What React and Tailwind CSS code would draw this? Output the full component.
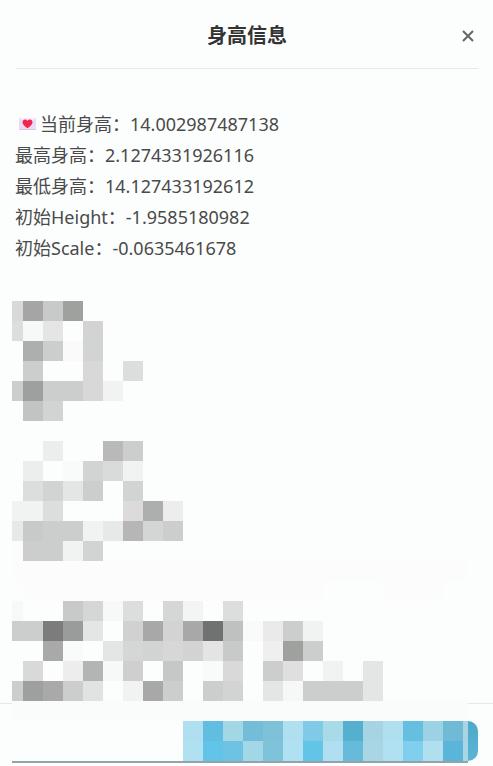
import React from "react";

const INFO = [
  { label: "当前身高", value: "14.002987487138", icon: true },
  { label: "最高身高", value: "2.1274331926116" },
  { label: "最低身高", value: "14.127433192612" },
  { label: "初始Height", value: "-1.9585180982" },
  { label: "初始Scale", value: "-0.0635461678" },
];

// one hex colour per tile, "-" leaves the tile empty
const BLOCK_ONE = [
  "d8d8d8 a5a5a5 c8cac9 9fa19f",
  "dcdedd f7f9f8 e5e5e5 - d3d3d3",
  "- adafae cccecd fafafa d2d4d3",
  "- cccecd - - d8d8d8 - dcdedd",
  "cccecd 9ea09f cccecd cccecd d8d8d8 f1f3f2",
  "- c2c4c3 d2d4d3",
];

const BLOCK_TWO = [
  "- - eceeed - - b9b9b9 cccecd",
  "- eceeed - f9fbfa d2d4d3 d9dbda f1f3f2",
  "- dcdedd d2d4d3 e4e6e5 cccecd - d2d4d3",
  "f1f3f2 f1f3f2 dcdedd - - - dcdadb adafae ecedec",
  "e7e9e8 c8cac9 cccecd cccecd f1f3f2 e7e9e8 b6b6b6 d4d6d5 cccecd",
  "fcfcfc cccecd cccecd f1f3f2 d2d4d3",
];

const BLOCK_THREE = [
  "f7f9f8 - - c8cac9 d5d7d6 f7f9f8 dcdedd - d5d7d6 f3f5f4 - dcdedd",
  "cccecd cccecd 7c7c7c 9a9c9b e4e6e5 - d1d1d1 a8a8a8 d3d3d3 a8a8a8 707271 bfc1c0 f9fbfa eaeaea cccecd f1f3f2",
  "- - a9a9a9 f9fbfa - e4e6e5 d5d7d6 d2d4d3 d7d7d7 d3d3d3 e4e4e4 c8cac9 - efefef 9fa19f cccecd",
  "- d9d9d9 - ecedec b3b5b4 f7f9f8 cfcfcf - c6c8c7 - f9fbfa d9d9d9 - cccecd e0dfe0 - f1f3f2 - e4e6e5",
  "cccecd 9ea09f a9a9a9 cccecd e1e3e2 - f1f3f2 a8a8a8 cccecd - cccecd d2d4d3 - e4e6e5 f6f8f7 cccecd cccecd cccecd e4e6e5",
];

const ACTION_TILES = [
  "fcfefd fcfefd fcfefd fcfefd fcfefd fcfefd fcfefd fcfefd fcfefd b0dff0 62bee0 a3d7e6 74bdd9 7ec1d8 b0dff0 7fcbe7 a8dae8 55b0d0 a6d4e3 b0dff0 65c0df 9dd2e4 6fbad4 a8d4e3",
  "fcfefd fcfefd fcfefd fcfefd fcfefd fcfefd fcfefd fcfefd fcfefd b0e1f2 62c5e8 6dc3e1 a2d7e8 7fc3db b0e1f2 62c5e8 afdff0 66bbda a8d6e5 b0e1f2 80d0ed b0dff0 5ab5d9 a8d6e5",
];

const Mosaic = ({ rows }) => (
  <div aria-hidden="true">
    {rows.map((row, i) => (
      <div key={i} className="grid h-5 grid-cols-[11px_repeat(22,20px)_5px]">
        {row.split(" ").map((color, j) => (
          <span
            key={j}
            style={{ backgroundColor: color === "-" ? undefined : `#${color}` }}
          />
        ))}
      </div>
    ))}
  </div>
);

const LoveLetter = () => (
  <svg viewBox="0 0 17 12" className="mr-1 ml-1 h-3 w-[17px]" aria-hidden="true">
    <rect width="17" height="12" fill="#e9dcf5" />
    <path d="M0 0h17L8.5 7z" fill="#f3eafb" />
    <path d="M0 11.5h17" stroke="#d6c6ea" />
    <path
      d="M8.5 10.3C5.5 8 3.5 6.3 3.5 4.2 3.5 1.3 7 .7 8.5 3 10 .7 13.5 1.3 13.5 4.2c0 2.1-2 3.8-5 6.1z"
      fill="#f5234f"
    />
  </svg>
);

const App = () => {
  return (
    <div className="min-h-screen overflow-hidden bg-[#fcfefd] font-['Noto_Sans','Noto_Sans_CJK_SC',sans-serif] text-[#4a4a4a]">
      <header className="relative mr-[15px] ml-4 flex h-[69px] items-center justify-center border-b border-[#e6e8e8] pt-1">
        <h1 className="text-xl font-bold text-[#333]">身高信息</h1>
        <button
          type="button"
          aria-label="关闭"
          className="absolute right-0 flex h-5 w-5 items-center justify-center text-[#666]"
        >
          <svg viewBox="0 0 12 12" className="h-3 w-3" fill="none" stroke="currentColor" strokeWidth="2">
            <path d="M1 1l10 10M11 1L1 11" />
          </svg>
        </button>
      </header>

      <main className="pt-[39px]">
        <ul className="px-[15px] text-lg">
          {INFO.map((item) => (
            <li key={item.label} className="flex h-[31px] items-center whitespace-nowrap">
              {item.icon && <LoveLetter />}
              {item.label}：{item.value}
            </li>
          ))}
        </ul>

        <div className="flex flex-col pt-[38px] pl-3">
          <Mosaic rows={BLOCK_ONE} />
          <div className="h-5" />
          <Mosaic rows={BLOCK_TWO} />
          <div className="h-10 w-[456px]">
            <div className="h-5 bg-[#fcfcfc]" />
            <div className="flex h-5 gap-[60px] pl-[11px]">
              <div className="w-[300px] bg-[#fcfcfc]" />
              <div className="w-[60px] bg-[#fcfcfc]" />
            </div>
          </div>
          <Mosaic rows={BLOCK_THREE} />
        </div>
      </main>

      <footer className="relative mt-0.5 border-t border-[#e6e8e8] pt-[17px] pr-[15px]">
        <button
          type="button"
          aria-label="确定"
          className="ml-auto block h-10 w-[295px] rounded-[10px] bg-linear-to-b from-[#4ea8c8] to-[#5bb5d4]"
        />
        <div className="absolute -top-[3px] left-3 w-[456px] border-b-2 border-[#92a4aa]">
          <div className="h-5 bg-[#fafcfb]" />
          <Mosaic rows={ACTION_TILES} />
        </div>
      </footer>
    </div>
  );
};

export default App;
